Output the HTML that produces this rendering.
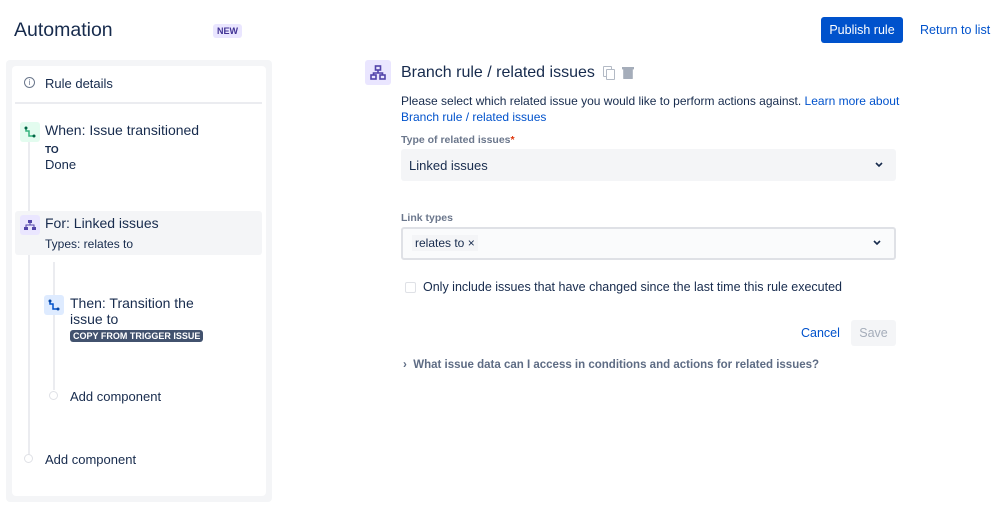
<!DOCTYPE html>
<html><head><style>
*{box-sizing:border-box;margin:0;padding:0}
body{width:999px;height:508px;background:#fff;font-family:"Liberation Sans",sans-serif;color:#172b4d;position:relative;overflow:hidden;font-size:13px}
.a{position:absolute;white-space:nowrap}
.ico{position:absolute;width:20px;height:20px;border-radius:3px}
</style></head><body>
<div class="a" style="left:14px;top:19px;font-size:19.5px;color:#172b4d">Automation</div>
<div class="a" style="left:213px;top:24px;background:#eae6ff;color:#403294;font-size:9px;font-weight:bold;padding:2px 4px;border-radius:3px">NEW</div>
<div class="a" style="left:821px;top:17px;width:82px;height:26px;background:#0052cc;border-radius:3px;color:#fff;font-size:12.5px;line-height:26px;text-align:center">Publish rule</div>
<div class="a" style="left:920px;top:23px;color:#0052cc;font-size:12.5px">Return to list</div>

<div class="a" style="left:6px;top:60px;width:266px;height:442px;background:#f4f5f7;border-radius:4px"></div>
<div class="a" style="left:12px;top:66px;width:254px;height:430px;background:#fff;border-radius:4px"></div>
<div class="a" style="left:24px;top:77px;width:11px;height:11px;border:1.3px solid #6b778c;border-radius:50%;font-size:8px;line-height:9px;text-align:center;color:#6b778c">i</div>
<div class="a" style="left:45px;top:76px">Rule details</div>
<div class="a" style="left:15px;top:102px;width:247px;height:2px;background:#ebecf0"></div>
<div class="a" style="left:28px;top:130px;width:2px;height:326px;background:#ebecf0"></div>
<div class="a" style="left:15px;top:211px;width:247px;height:44px;background:#f4f5f7;border-radius:3px"></div>
<div class="ico" style="left:20px;top:122px;background:#e3fcef"><svg width="20" height="20"><path d="M6 6v3h3v5h5" stroke="#36b37e" stroke-width="1.5" fill="none"/><circle cx="6" cy="6" r="1.5" fill="#006644"/><circle cx="14" cy="14" r="1.5" fill="#006644"/></svg></div>
<div class="a" style="left:45px;top:122px;font-size:14px">When: Issue transitioned</div>
<div class="a" style="left:45px;top:145px;font-size:10px;font-weight:bold">TO</div>
<div class="a" style="left:45px;top:157px">Done</div>
<div class="ico" style="left:20px;top:215px;background:#eae6ff"><svg width="20" height="20" fill="#5243aa"><rect x="8" y="5" width="4" height="3"/><rect x="4" y="12" width="4" height="3"/><rect x="12" y="12" width="4" height="3"/><path d="M10 8v2M6 12v-2h8v2" stroke="#5243aa" fill="none"/></svg></div>
<div class="a" style="left:45px;top:215px;font-size:14px">For: Linked issues</div>
<div class="a" style="left:45px;top:237px;font-size:12px">Types: relates to</div>
<div class="a" style="left:53px;top:262px;width:2px;height:128px;background:#ebecf0"></div>
<div class="ico" style="left:44px;top:295px;background:#deebff"><svg width="20" height="20"><path d="M6 6v3h3v5h5" stroke="#0052cc" stroke-width="1.5" fill="none"/><circle cx="6" cy="6" r="1.5" fill="#0747a6"/><circle cx="14" cy="14" r="1.5" fill="#0747a6"/></svg></div>
<div class="a" style="left:70px;top:295px;font-size:14px;line-height:16px">Then: Transition the<br>issue to</div>
<div class="a" style="left:70px;top:330px;background:#42526e;color:#fff;font-size:9px;font-weight:bold;padding:1px 3px;border-radius:3px">COPY FROM TRIGGER ISSUE</div>
<div class="a" style="left:49px;top:391px;width:9px;height:9px;border:1.5px solid #dfe1e6;border-radius:50%;background:#fff"></div>
<div class="a" style="left:70px;top:389px">Add component</div>
<div class="a" style="left:24px;top:454px;width:9px;height:9px;border:1.5px solid #dfe1e6;border-radius:50%;background:#fff"></div>
<div class="a" style="left:45px;top:452px">Add component</div>

<div class="ico" style="left:365px;top:60px;width:26px;height:25px;background:#eae6ff"><svg width="26" height="25" fill="none" stroke="#5243aa" stroke-width="1.6"><rect x="10.5" y="6" width="5" height="4"/><rect x="6" y="15" width="5" height="4"/><rect x="15" y="15" width="5" height="4"/><path d="M13 10v3M8.5 15v-2h9v2"/></svg></div>
<div class="a" style="left:401px;top:64px;font-size:16px">Branch rule / related issues</div>
<div class="a" style="left:603px;top:66px;width:9px;height:11px;border:1.5px solid #b3bac5;border-radius:1px"></div>
<div class="a" style="left:606px;top:69px;width:9px;height:11px;border:1.5px solid #b3bac5;border-radius:1px;background:#fff"></div>
<div class="a" style="left:622px;top:67px;width:12px;height:12px;background:#a5adba;border-radius:0 0 2px 2px;clip-path:polygon(0 0,100% 0,100% 20%,90% 20%,90% 100%,10% 100%,10% 20%,0 20%)"></div>
<div class="a" style="left:401px;top:93px;font-size:12px;line-height:16px">Please select which related issue you would like to perform actions against. <span style="color:#0052cc">Learn more about<br>Branch rule / related issues</span></div>
<div class="a" style="left:401px;top:134px;font-size:10.5px;font-weight:bold;color:#6b778c">Type of related issues<span style="color:#de350b">*</span></div>
<div class="a" style="left:401px;top:149px;width:495px;height:32px;background:#f4f5f7;border-radius:3px"></div>
<div class="a" style="left:409px;top:158px">Linked issues</div>
<svg class="a" style="left:874px;top:161px" width="10" height="8"><path d="M2 2l3 3 3-3" stroke="#172b4d" stroke-width="1.6" fill="none"/></svg>
<div class="a" style="left:401px;top:212px;font-size:10.5px;font-weight:bold;color:#6b778c">Link types</div>
<div class="a" style="left:401px;top:227px;width:495px;height:33px;background:#fafbfc;border:2px solid #dfe1e6;border-radius:3px"></div>
<div class="a" style="left:412px;top:235px;background:#f4f5f7;padding:1px 3px;font-size:12px">relates to ×</div>
<svg class="a" style="left:872px;top:239px" width="10" height="8"><path d="M2 2l3 3 3-3" stroke="#172b4d" stroke-width="1.6" fill="none"/></svg>
<div class="a" style="left:405px;top:282px;width:11px;height:11px;border:1.5px solid #dfe1e6;border-radius:2px"></div>
<div class="a" style="left:423px;top:280px;font-size:12.5px">Only include issues that have changed since the last time this rule executed</div>
<div class="a" style="left:801px;top:326px;color:#0052cc;font-size:12.5px">Cancel</div>
<div class="a" style="left:851px;top:320px;width:45px;height:26px;background:#f4f5f7;border-radius:3px;color:#a5adba;line-height:26px;text-align:center;font-size:12.5px">Save</div>
<div class="a" style="left:403px;top:359px;font-size:11.5px;font-weight:bold;color:#5e6c84">›&nbsp;&nbsp;What issue data can I access in conditions and actions for related issues?</div>
</body></html>
